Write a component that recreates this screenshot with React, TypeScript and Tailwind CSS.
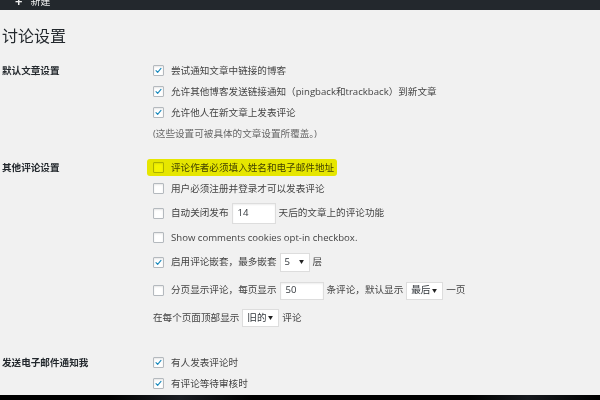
import type { ReactNode } from "react";

function Checkbox({ checked }: { checked?: boolean }) {
  return (
    <span className="mr-[7px] flex h-[11px] w-[11px] shrink-0 items-center justify-center rounded-[1px] border border-[#b4b9be] bg-white shadow-[inset_0_1px_2px_rgba(0,0,0,0.1)]">
      {checked && (
        <svg viewBox="0 0 20 20" className="h-[11px] w-[11px]">
          <path
            d="M4.5 10.2l3.6 3.8 7.4-8.6"
            fill="none"
            stroke="#1e8cbe"
            strokeWidth={2.6}
            strokeLinecap="round"
            strokeLinejoin="round"
          />
        </svg>
      )}
    </span>
  );
}

function NumInput({ value }: { value: string }) {
  return (
    <span className="mx-[3px] flex h-full w-[44px] items-center border border-[#dddddd] bg-white pl-[5px] text-[#32373c] shadow-[inset_0_1px_2px_rgba(0,0,0,0.07)]">
      {value}
    </span>
  );
}

function Select({ value, width }: { value: string; width: string }) {
  return (
    <span
      className={`mx-[3px] flex h-full items-center justify-between border border-[#dddddd] bg-white pl-[4px] pr-[5px] text-[#32373c] ${width}`}
    >
      <span>{value}</span>
      <svg viewBox="0 0 6 5" className="h-[4px] w-[5px]">
        <path d="M0 0h6L3 5z" fill="#222" />
      </svg>
    </span>
  );
}

function Row({
  h,
  children,
  inputH,
}: {
  h: string;
  children: ReactNode;
  inputH?: string;
}) {
  return (
    <div className={`flex items-center ${h}`}>
      <div className={`flex items-center whitespace-nowrap ${inputH ?? ""}`}>{children}</div>
    </div>
  );
}

function Section({
  label,
  className,
  children,
}: {
  label: string;
  className?: string;
  children: ReactNode;
}) {
  return (
    <div className={`flex ${className ?? ""}`}>
      <div className="flex h-[21px] w-[151px] shrink-0 items-center font-bold text-[#23282d]">
        {label}
      </div>
      <div className="flex flex-col">{children}</div>
    </div>
  );
}

export default function App() {
  return (
    <div className="flex h-[400px] w-[600px] flex-col overflow-hidden bg-[#f1f1f1] font-['Open_Sans','Noto_Sans_CJK_SC',sans-serif] text-[9.6px] text-[#444]">
      <div className="h-[10px] shrink-0 overflow-hidden bg-[#23282d]">
        <div className="-mt-[5px] flex h-[12px] items-center gap-[8px] pl-[15px] text-[10px] leading-[12px] text-[#eeeeee]">
          <span className="text-[13px] font-bold">+</span>
          <span>新建</span>
        </div>
      </div>

      <div className="flex-1 overflow-hidden px-[2px]">
        <h1 className="mt-[16px] h-[20px] text-[16px] leading-[20px] text-[#23282d]">
          讨论设置
        </h1>

        <Section label="默认文章设置" className="mt-[14.5px]">
          <Row h="h-[21px]">
            <Checkbox checked />
            尝试通知文章中链接的博客
          </Row>
          <Row h="h-[21px]">
            <Checkbox checked />
            允许其他博客发送链接通知（pingback和trackback）到新文章
          </Row>
          <Row h="h-[21px]">
            <Checkbox checked />
            允许他人在新文章上发表评论
          </Row>
          <Row h="h-[21px]">
            <span className="text-[#666]">(这些设置可被具体的文章设置所覆盖。)</span>
          </Row>
        </Section>

        <Section label="其他评论设置" className="mt-[13px]">
          <div className="relative">
            <Row h="h-[21px]">
              <Checkbox />
              评论作者必须填入姓名和电子邮件地址
            </Row>
            <div className="pointer-events-none absolute -left-[6px] top-[1.5px] h-[17px] w-[190px] rounded-[3px] bg-[#f4f400] mix-blend-multiply blur-[0.6px]" />
          </div>
          <Row h="h-[21px]">
            <Checkbox />
            用户必须注册并登录才可以发表评论
          </Row>
          <Row h="h-[28px]" inputH="h-[21px]">
            <Checkbox />
            自动关闭发布
            <NumInput value="14" />
            天后的文章上的评论功能
          </Row>
          <Row h="h-[21px]">
            <Checkbox />
            Show comments cookies opt-in checkbox.
          </Row>
          <Row h="h-[27px]" inputH="h-[19px]">
            <Checkbox checked />
            启用评论嵌套，最多嵌套
            <Select value="5" width="w-[30px]" />
            层
          </Row>
          <Row h="h-[30px]" inputH="h-[18px]">
            <Checkbox />
            分页显示评论，每页显示
            <NumInput value="50" />
            条评论，默认显示
            <Select value="最后" width="w-[37px]" />
            一页
          </Row>
          <Row h="h-[25px]" inputH="h-[18px]">
            在每个页面顶部显示
            <Select value="旧的" width="w-[37px]" />
            评论
          </Row>
        </Section>

        <Section label="发送电子邮件通知我" className="mt-[22px]">
          <Row h="h-[21px]">
            <Checkbox checked />
            有人发表评论时
          </Row>
          <Row h="h-[21px]">
            <Checkbox checked />
            有评论等待审核时
          </Row>
        </Section>
      </div>

      <div className="h-[5px] shrink-0 bg-[linear-gradient(90deg,#000_0%,#000_18%,#1b1e23_30%,#000_42%,#000_78%,#16191d_88%,#000_100%)]" />
    </div>
  );
}
